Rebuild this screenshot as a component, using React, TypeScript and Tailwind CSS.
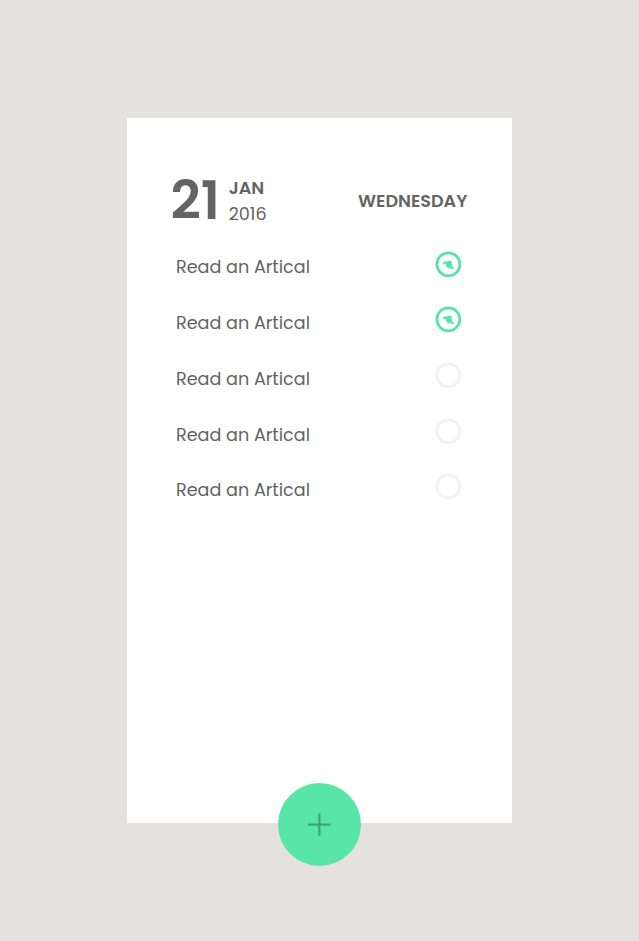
const items = [true, true, false, false, false];

function Check({ done }: { done: boolean }) {
  return (
    <svg className="h-[26px] w-[26px]" viewBox="0 0 26 26" fill="none">
      <circle cx="13.4" cy="13.3" r="11.500" stroke={done ? '#55e4a6' : '#f0f0f6'} strokeWidth="2.700" />
      {done && (
        <path
          d="M8 12.300L9.300 10.400H11.200L12.200 11L13 10H16.800L16 12L17 13.300L16.800 15.500L18.600 16.300V17.700H16.200L14.900 15.600L14.600 17.800L12.800 17L10.900 14.300L11.700 12.900L10 12.500L8.800 13.600Z"
          fill="#55e4a6"
          stroke="#55e4a6"
          strokeWidth=".3"
        />
      )}
    </svg>
  );
}

export default function App() {
  return (
    <div className="h-[941px] w-[639px] bg-[#e5e1de] pt-[118px] font-['Poppins','Open_Sans',sans-serif] text-[#646464]">
      <main className="mx-auto flex h-[748px] w-[385px] flex-col bg-[linear-gradient(#fff_705px,transparent_705px)]">
        <header className="flex h-[121px] items-start whitespace-nowrap pl-[43.500px] pr-[44.600px] pt-[57px]">
          <div className="mt-[-1px] w-[58.200px] text-[52.800px] font-semibold leading-[54px]">21</div>
          <div className="text-[17.600px] leading-[26px]">
            <div className="font-semibold">JAN</div>
            <div>2016</div>
          </div>
          <div className="ml-auto mt-[13px] text-[17.600px] font-semibold leading-[26px]">WEDNESDAY</div>
        </header>
        <ul className="flex flex-col pl-[49px] pr-[51px]">
          {items.map((done, i) => (
            <li key={i} className="flex h-[55.700px] items-start justify-between pt-[11.650px]">
              <span className="mt-[3.800px] text-[17.600px] leading-[26px]">Read an Artical</span>
              <Check done={done} />
            </li>
          ))}
        </ul>
        <button aria-label="Add" className="mx-auto mt-auto flex h-[83px] w-[83px] items-center justify-center rounded-full bg-[#58e6a8]">
          <svg className="h-6 w-6" viewBox="0 0 24 24" stroke="#40a479" strokeWidth="2.2"><path d="M11.400 .3v22.700M0 11.600h22.700" /></svg>
        </button>
      </main>
    </div>
  );
}
